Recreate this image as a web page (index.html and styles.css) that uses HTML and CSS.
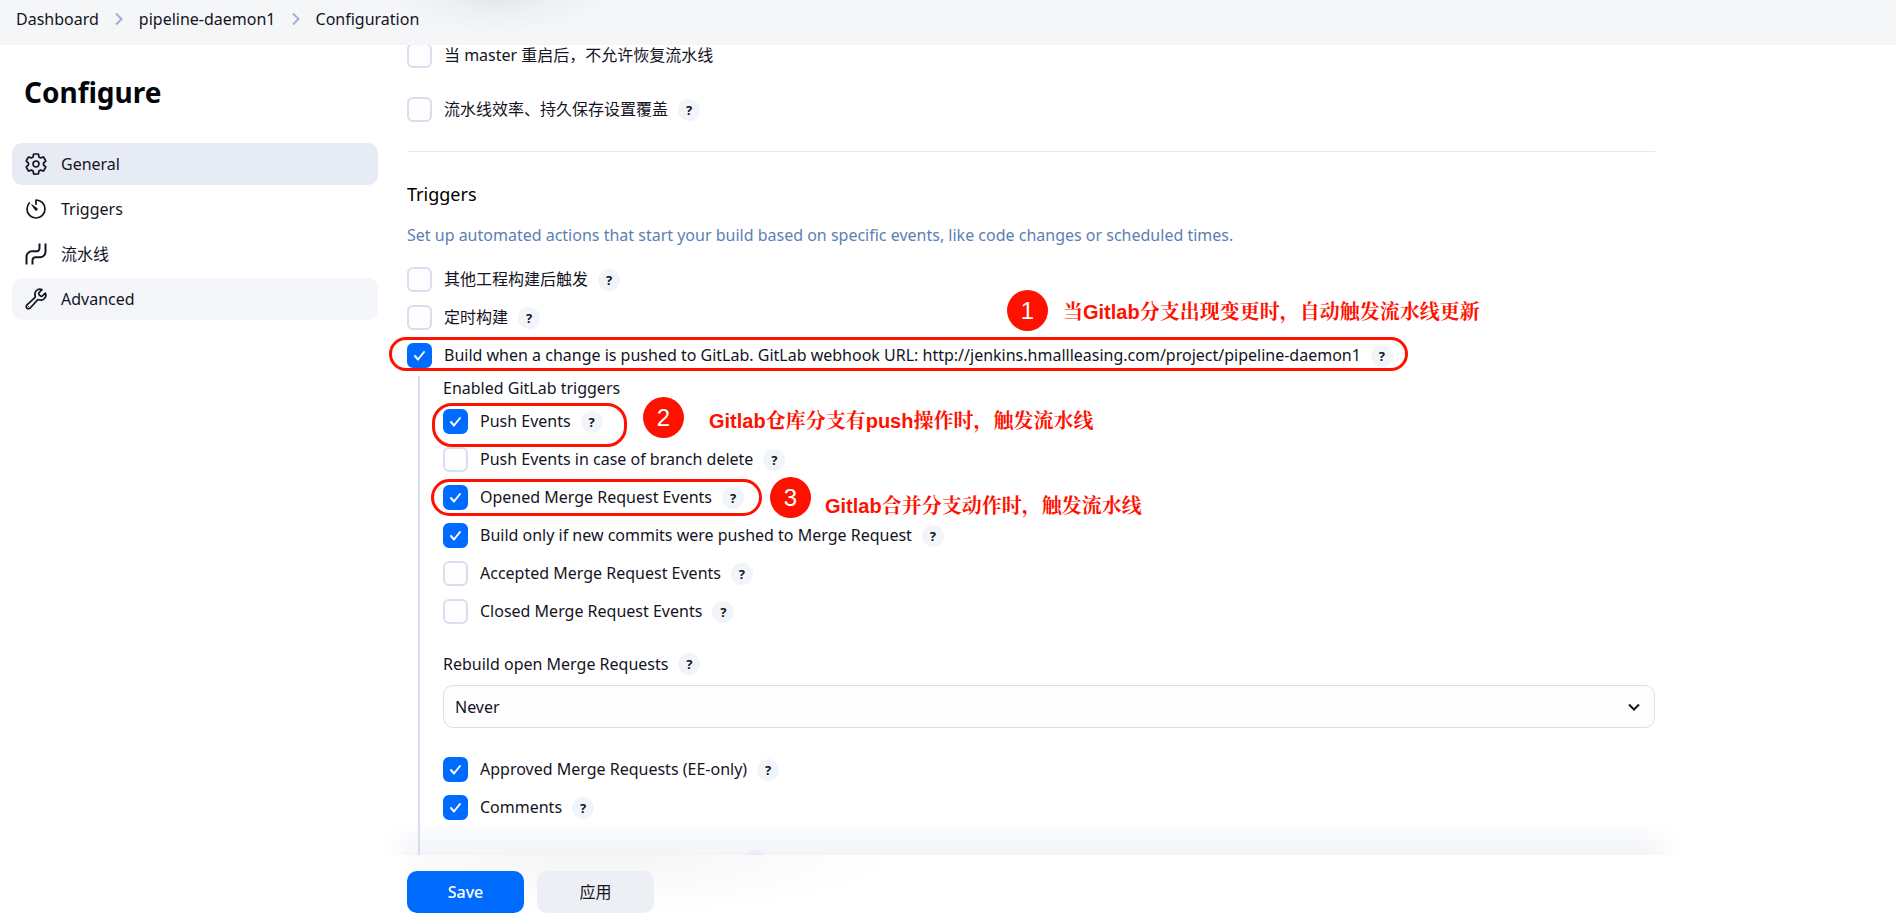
FILE: index.html
```html
<!DOCTYPE html>
<html lang="zh-CN">
<head>
<meta charset="utf-8">
<title>pipeline-daemon1 Configuration</title>
<link rel="stylesheet" href="styles.css">
</head>
<body>
<header class="topbar">
  <nav class="crumbs" aria-label="Breadcrumb">
    <a href="#">Dashboard</a>
    <svg class="crumb-sep" viewBox="0 0 10 14" aria-hidden="true"><path d="M2 1.500l5.500 5.500L2 12.500"/></svg>
    <a href="#">pipeline-daemon1</a>
    <svg class="crumb-sep" viewBox="0 0 10 14" aria-hidden="true"><path d="M2 1.500l5.500 5.500L2 12.500"/></svg>
    <a href="#">Configuration</a>
  </nav>
</header>

<div class="layout">
  <aside class="sidebar">
    <h1>Configure</h1>
    <nav class="tasks" aria-label="Sections">
      <a class="task active" href="#general">
        <svg viewBox="0 0 512 512" aria-hidden="true"><path d="M262.290 192.310a64 64 0 1057.400 57.400 64.130 64.130 0 00-57.400-57.400zM416.390 256a154.340 154.340 0 01-1.530 20.790l45.210 35.460a10.810 10.810 0 012.450 13.750l-42.770 74a10.810 10.810 0 01-13.140 4.590l-44.900-18.080a16.110 16.110 0 00-15.170 1.750A164.480 164.480 0 01325 400.800a15.940 15.940 0 00-8.820 12.140l-6.730 47.890a11.080 11.080 0 01-10.680 9.170h-85.540a11.110 11.110 0 01-10.690-8.870l-6.720-47.820a16.070 16.070 0 00-9-12.220 155.300 155.300 0 01-21.460-12.570 16 16 0 00-15.110-1.710l-44.890 18.070a10.810 10.810 0 01-13.140-4.580l-42.770-74a10.800 10.800 0 012.450-13.750l38.210-30a16.050 16.050 0 006-14.080c-.360-4.170-.580-8.330-.580-12.500s.210-8.270.580-12.350a16 16 0 00-6.070-13.940l-38.190-30A10.810 10.810 0 0149.480 186l42.770-74a10.810 10.810 0 0113.140-4.590l44.900 18.080a16.110 16.110 0 0015.170-1.750A164.480 164.480 0 01187 111.200a15.940 15.940 0 008.820-12.140l6.730-47.890A11.080 11.080 0 01213.230 42h85.540a11.110 11.110 0 0110.690 8.870l6.720 47.820a16.070 16.070 0 009 12.220 155.300 155.300 0 0121.460 12.570 16 16 0 0015.110 1.710l44.890-18.070a10.810 10.810 0 0113.140 4.580l42.770 74a10.800 10.800 0 01-2.450 13.750l-38.210 30a16.050 16.050 0 00-6.050 14.080c.330 4.140.550 8.300.550 12.470z"/></svg>
        <span>General</span>
      </a>
      <a class="task" href="#triggers">
        <svg viewBox="0 0 512 512" aria-hidden="true"><path d="M112.910 128A191.850 191.850 0 0064 254c-1.180 106.350 85.650 193.800 192 194 106.200.200 192-85.830 192-192 0-104.540-83.550-189.610-187.500-192a4.360 4.360 0 00-4.500 4.370V152"/><path class="solid" d="M233.380 278.630l-79-113a8.130 8.130 0 0111.320-11.320l113 79a32.500 32.500 0 01-37.250 53.260 33.210 33.210 0 01-8.070-7.940z"/></svg>
        <span>Triggers</span>
      </a>
      <a class="task" href="#pipeline">
        <svg viewBox="0 0 24 24" aria-hidden="true"><path d="M15.500 1.500v4.800a3 3 0 0 1-3 3H8a5.500 5.500 0 0 0-5.500 5.500v7.700M21.500 1.500v8.200a5.500 5.500 0 0 1-5.500 5.500h-4.500a3 3 0 0 0-3 3v4.300"/></svg>
        <span>流水线</span>
      </a>
      <a class="task hover" href="#advanced">
        <svg viewBox="0 0 512 512" aria-hidden="true"><path d="M393.870 190a32.100 32.100 0 01-45.250 0l-26.570-26.570a32.090 32.090 0 010-45.260L382.190 58a1 1 0 00-.300-1.640c-38.820-16.640-89.150-8.160-121.110 23.570-30.580 30.350-32.320 76-21.120 115.840a31.930 31.930 0 01-9.060 32.080L64 380a48.170 48.170 0 1068 68l153.860-167a31.930 31.930 0 0131.600-9.130c39.540 10.590 84.540 8.600 114.720-21.190 32.490-32 39.500-88.560 23.750-120.930a1 1 0 00-1.600-.260z"/><circle class="solid" cx="96" cy="416" r="12"/></svg>
        <span>Advanced</span>
      </a>
    </nav>
  </aside>

  <main class="content">
    <form class="form">
      <div class="scroller">
        <div class="options spaced">
          <div class="option"><input type="checkbox" id="resume"><label for="resume">当 master 重启后，不允许恢复流水线</label></div>
          <div class="option"><input type="checkbox" id="speed"><label for="speed">流水线效率、持久保存设置覆盖</label><button type="button" class="help" aria-label="Help">?</button></div>
        </div>
        <hr>
        <h2 id="triggers">Triggers</h2>
        <p class="description">Set up automated actions that start your build based on specific events, like code changes or scheduled times.</p>
        <div class="options">
          <div class="option"><input type="checkbox" id="after"><label for="after">其他工程构建后触发</label><button type="button" class="help" aria-label="Help">?</button></div>
          <div class="option"><input type="checkbox" id="timer"><label for="timer">定时构建</label><button type="button" class="help" aria-label="Help">?</button></div>
          <div class="option"><input type="checkbox" id="gitlab" checked><label for="gitlab">Build when a change is pushed to GitLab. GitLab webhook URL: http://jenkins.hmallleasing.com/project/pipeline-daemon1</label><button type="button" class="help" aria-label="Help">?</button></div>
        </div>
        <div class="nested">
          <div class="field-label">Enabled GitLab triggers</div>
          <div class="options">
            <div class="option"><input type="checkbox" id="push" checked><label for="push">Push Events</label><button type="button" class="help" aria-label="Help">?</button></div>
            <div class="option"><input type="checkbox" id="branch-delete"><label for="branch-delete">Push Events in case of branch delete</label><button type="button" class="help" aria-label="Help">?</button></div>
            <div class="option"><input type="checkbox" id="opened" checked><label for="opened">Opened Merge Request Events</label><button type="button" class="help" aria-label="Help">?</button></div>
            <div class="option"><input type="checkbox" id="new-commits" checked><label for="new-commits">Build only if new commits were pushed to Merge Request</label><button type="button" class="help" aria-label="Help">?</button></div>
            <div class="option"><input type="checkbox" id="accepted"><label for="accepted">Accepted Merge Request Events</label><button type="button" class="help" aria-label="Help">?</button></div>
            <div class="option"><input type="checkbox" id="closed"><label for="closed">Closed Merge Request Events</label><button type="button" class="help" aria-label="Help">?</button></div>
          </div>
          <div class="field-label section"><label for="rebuild">Rebuild open Merge Requests</label><button type="button" class="help" aria-label="Help">?</button></div>
          <select id="rebuild"><option>Never</option></select>
          <div class="options section-wide">
            <div class="option"><input type="checkbox" id="approved" checked><label for="approved">Approved Merge Requests (EE-only)</label><button type="button" class="help" aria-label="Help">?</button></div>
            <div class="option"><input type="checkbox" id="comments" checked><label for="comments">Comments</label><button type="button" class="help" aria-label="Help">?</button></div>
          </div>
          <div class="field-label section-wide"><label for="regex">Comment (regex) for triggering a build</label><button type="button" class="help" aria-label="Help">?</button></div>
          <input class="text" type="text" id="regex">
        </div>
      </div>
      <div class="actions">
        <button type="submit" class="btn primary">Save</button>
        <button type="button" class="btn">应用</button>
      </div>
    </form>
  </main>
</div>

<div class="notes">
  <div class="outline outline-url"></div>
  <div class="outline outline-push"></div>
  <div class="outline outline-merge"></div>
  <div class="note note-url"><span class="num">1</span><span class="note-text">当Gitlab分支出现变更时，自动触发流水线更新</span></div>
  <div class="note note-push"><span class="num">2</span><span class="note-text">Gitlab仓库分支有push操作时，触发流水线</span></div>
  <div class="note note-merge"><span class="num">3</span><span class="note-text">Gitlab合并分支动作时，触发流水线</span></div>
</div>
</body>
</html>
```
FILE: styles.css
```css
:root {
  --text: #14141f;
  --blue: #006bff;
  --line: #d9deec;
  --red: #ff1100;
}
* { box-sizing: border-box; }
body {
  margin: 0;
  height: 100vh;
  display: flex;
  flex-direction: column;
  overflow: hidden;
  position: relative;
  background: #fff;
  color: var(--text);
  font: 16px/22px "Noto Sans", "Open Sans", "Noto Sans CJK SC", sans-serif;
}
a { color: inherit; text-decoration: none; }
button, input, select { font: inherit; color: inherit; }

.topbar {
  flex: none;
  height: 45px;
  padding: 8px 16px 0;
  background: radial-gradient(ellipse 110px 40px at 498px -8px, #e1e2e6, #eeeff2 50%, #f5f6f8 100%) #f5f6f8;
  position: relative;
  z-index: 1;
}
.crumbs { display: flex; align-items: center; gap: 15px; }
.crumb-sep { width: 10px; height: 14px; fill: none; stroke: #9db1d4; stroke-width: 2; }

.layout { flex: 1; min-height: 0; display: flex; }
.sidebar { flex: none; width: 390px; padding: 29px 12px 0; }
h1 { margin: 0 0 33px 12px; font-size: 28px; line-height: 36px; font-weight: 700; color: #05050c; }
.tasks { display: flex; flex-direction: column; gap: 3px; }
.task {
  display: flex;
  align-items: center;
  gap: 13px;
  height: 42px;
  padding: 0 12px;
  border-radius: 10px;
}
.task.active { background: #e7ebf3; }
.task.hover { background: #f5f6fa; }
.task svg {
  width: 24px;
  height: 24px;
  fill: none;
  stroke: currentColor;
  stroke-width: 36;
  stroke-linecap: round;
  stroke-linejoin: round;
}
.task svg[viewBox="0 0 24 24"] { stroke-width: 2; stroke-linecap: butt; }
.task .solid { fill: currentColor; stroke: none; }

.content { flex: 1; min-width: 0; padding: 0 17px; }
.form { height: 100%; max-width: 1248px; display: flex; flex-direction: column; }
.scroller { flex: 1; min-height: 0; overflow: hidden; }
.options { display: flex; flex-direction: column; gap: 13px; }
.spaced { gap: 29px; margin-top: -2px; }
hr { margin: 29px 0 30px; border: 0; border-top: 1px solid #e6e8ec; }
h2 { margin: 0 0 18px; font-size: 18px; line-height: 24px; font-weight: 400; color: #000; }
.description { margin: 0 0 21px; color: #5a7fb5; }

.option { display: flex; align-items: center; height: 25px; }
.option label { margin-left: 12px; padding-bottom: 1px; }
input[type="checkbox"] {
  appearance: none;
  flex: none;
  width: 25px;
  height: 25px;
  margin: 0;
  border: 2px solid var(--line);
  border-radius: 6px;
  background: #fdfdfe;
}
input[type="checkbox"]:checked {
  border-color: var(--blue);
  background: var(--blue) url("data:image/svg+xml,%3Csvg xmlns='http://www.w3.org/2000/svg' viewBox='0 0 21 21'%3E%3Cpath d='M6 11l3 3.500 6-7.500' fill='none' stroke='white' stroke-width='2' stroke-linecap='round' stroke-linejoin='round'/%3E%3C/svg%3E") center / 21px 21px no-repeat;
}
.help {
  flex: none;
  width: 22px;
  height: 22px;
  margin-left: 10px;
  padding: 0;
  border: 0;
  border-radius: 50%;
  background: #f1f4f9;
  font-size: 13px;
  line-height: 22px;
  font-weight: 700;
}

.nested {
  margin: 8px 0 0 11px;
  padding-left: 23px;
  border-left: 2px solid var(--line);
}
.field-label { display: flex; align-items: center; height: 24px; margin-bottom: 9px; }
.section { margin-top: 28px; }
.section-wide { margin-top: 29px; }
select {
  appearance: none;
  display: block;
  width: 100%;
  height: 43px;
  padding: 0 11px;
  border: 1px solid var(--line);
  border-radius: 10px;
  background: #fdfdfe url("data:image/svg+xml,%3Csvg xmlns='http://www.w3.org/2000/svg' viewBox='0 0 12 8'%3E%3Cpath d='M1 1.500l5 5 5-5' fill='none' stroke='%2314141f' stroke-width='2'/%3E%3C/svg%3E") right 14px center / 12px 8px no-repeat;
}
.text { width: 100%; height: 43px; border: 1px solid var(--line); border-radius: 10px; }

.actions {
  flex: none;
  display: flex;
  gap: 13px;
  padding: 16px 0 5px;
  position: relative;
  background: radial-gradient(ellipse 300px 60px at 190px 0, #f5f5f6, #fdfdfd 80%, #fff);
}
.actions::before {
  content: "";
  position: absolute;
  left: -24px;
  right: -24px;
  bottom: 100%;
  height: 36px;
  background: linear-gradient(to top, rgba(222, 227, 238, 0.400), rgba(235, 238, 246, 0));
  mask-image: linear-gradient(to right, transparent, #000 36px, #000 calc(100% - 36px), transparent);
}
.btn {
  width: 117px;
  height: 42px;
  padding: 0;
  border: 0;
  border-radius: 10px;
  background: #eceff4;
}
.btn.primary { background: var(--blue); color: #fff; font-weight: 500; }

.notes { position: absolute; inset: 0; z-index: 2; pointer-events: none; }
.outline { position: absolute; border: 3px solid var(--red); border-radius: 20px; }
.outline-url { left: 389px; top: 337px; width: 1019px; height: 34px; }
.outline-push { left: 432px; top: 403px; width: 195px; height: 44px; }
.outline-merge { left: 431px; top: 479px; width: 331px; height: 37px; }
.note { position: absolute; display: flex; align-items: center; color: var(--red); white-space: nowrap; }
.num {
  width: 41px;
  height: 41px;
  border-radius: 50%;
  background: var(--red);
  color: #fff;
  font: 24px/41px "Liberation Sans", Arial, sans-serif;
  text-align: center;
}
.note-text { font: 700 20px/24px "Liberation Sans", SimSun, "Noto Serif CJK SC", "Noto Sans CJK SC", sans-serif; }
.note-url { left: 1007px; top: 290px; gap: 15px; }
.note-push { left: 643px; top: 397px; gap: 25px; }
.note-merge { left: 770px; top: 477px; gap: 14px; }
.note-url .note-text { padding-top: 2px; }
.note-push .note-text { padding-top: 6px; }
.note-merge .note-text { padding-top: 16px; }
```
